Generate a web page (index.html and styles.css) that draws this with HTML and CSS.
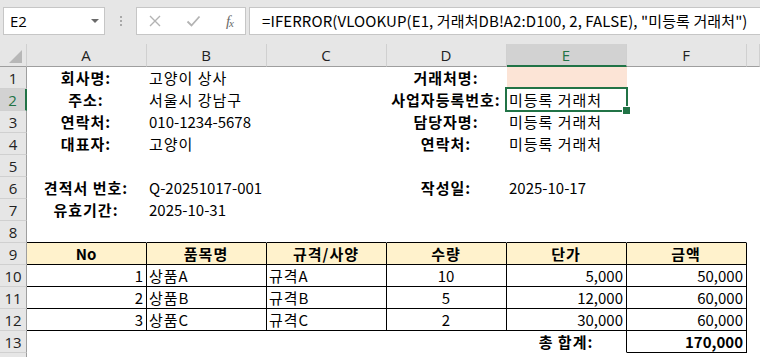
FILE: index.html
```html
<!DOCTYPE html>
<html>
<head>
    <meta charset="utf-8">
    <title>견적서 - Excel</title>
    <link rel="stylesheet" href="styles.css">
</head>
<body>
    <div class="formula-bar">
        <div class="name-box">
            <span>E2</span>
            <svg class="caret" width="8" height="5" viewBox="0 0 8 5"><path d="M0 0h8L4 4z" fill="#6a6a6a"/></svg>
        </div>
        <div class="grip"><i></i><i></i><i></i></div>
        <div class="fn-buttons">
            <svg width="14" height="14" viewBox="0 0 14 14"><path d="M2 2l10 10M12 2L2 12" stroke="#b3b3b3" stroke-width="1.4" fill="none"/></svg>
            <svg width="15" height="14" viewBox="0 0 15 14"><path d="M1.5 7.5l4 4 8-9" stroke="#b3b3b3" stroke-width="1.8" fill="none"/></svg>
            <span class="fx">f<sub>x</sub></span>
        </div>
        <div class="formula-input">=IFERROR(VLOOKUP(E1, 거래처DB!A2:D100, 2, FALSE), "미등록 거래처")</div>
    </div>

    <table class="sheet">
        <colgroup>
            <col class="col-rh">
            <col class="col"><col class="col"><col class="col">
            <col class="col"><col class="col"><col class="col">
            <col>
        </colgroup>
        <thead>
            <tr>
                <th class="corner"><span></span></th>
                <th>A</th><th>B</th><th>C</th><th>D</th>
                <th class="active">E</th><th>F</th><th></th>
            </tr>
        </thead>
        <tbody>
            <tr>
                <td class="rh">1</td>
                <td class="b c">회사명:</td><td>고양이 상사</td><td></td>
                <td class="b c">거래처명:</td><td class="peach"></td><td></td><td></td>
            </tr>
            <tr>
                <td class="rh active">2</td>
                <td class="b c">주소:</td><td>서울시 강남구</td><td></td>
                <td class="b c">사업자등록번호:</td><td class="sel">미등록 거래처</td><td></td><td></td>
            </tr>
            <tr>
                <td class="rh">3</td>
                <td class="b c">연락처:</td><td class="n">010-1234-5678</td><td></td>
                <td class="b c">담당자명:</td><td>미등록 거래처</td><td></td><td></td>
            </tr>
            <tr>
                <td class="rh">4</td>
                <td class="b c">대표자:</td><td>고양이</td><td></td>
                <td class="b c">연락처:</td><td>미등록 거래처</td><td></td><td></td>
            </tr>
            <tr>
                <td class="rh">5</td>
                <td></td><td></td><td></td><td></td><td></td><td></td><td></td>
            </tr>
            <tr>
                <td class="rh">6</td>
                <td class="b c">견적서 번호:</td><td class="n">Q-20251017-001</td><td></td>
                <td class="b c">작성일:</td><td class="n">2025-10-17</td><td></td><td></td>
            </tr>
            <tr>
                <td class="rh">7</td>
                <td class="b c">유효기간:</td><td class="n">2025-10-31</td><td></td>
                <td></td><td></td><td></td><td></td>
            </tr>
            <tr>
                <td class="rh">8</td>
                <td class="edge"></td><td class="edge"></td><td class="edge"></td>
                <td class="edge"></td><td class="edge"></td><td class="edge"></td><td></td>
            </tr>
            <tr>
                <td class="rh">9</td>
                <td class="t head n">No</td><td class="t head">품목명</td><td class="t head">규격/사양</td>
                <td class="t head">수량</td><td class="t head">단가</td><td class="t head">금액</td><td></td>
            </tr>
            <tr>
                <td class="rh">10</td>
                <td class="t r n">1</td><td class="t">상품A</td><td class="t">규격A</td>
                <td class="t c n">10</td><td class="t r n">5,000</td><td class="t r n">50,000</td><td></td>
            </tr>
            <tr>
                <td class="rh">11</td>
                <td class="t r n">2</td><td class="t">상품B</td><td class="t">규격B</td>
                <td class="t c n">5</td><td class="t r n">12,000</td><td class="t r n">60,000</td><td></td>
            </tr>
            <tr>
                <td class="rh">12</td>
                <td class="t r n">3</td><td class="t">상품C</td><td class="t">규격C</td>
                <td class="t c n">2</td><td class="t r n">30,000</td><td class="t r n">60,000</td><td></td>
            </tr>
            <tr>
                <td class="rh">13</td>
                <td></td><td></td><td></td><td></td>
                <td class="b c side">총 합계:</td><td class="t b r n">170,000</td><td></td>
            </tr>
            <tr>
                <td class="rh"></td>
                <td></td><td></td><td></td><td></td><td></td><td></td><td></td>
            </tr>
        </tbody>
    </table>
</body>
</html>
```

FILE: styles.css
```css
:root {
    --chrome: #e6e6e6;
    --header: #e6e6e6;
    --header-active: #d2d2d2;
    --line: #d0d0d0;
    --line-dark: #9e9e9e;
    --green: #217346;
}

* {
    box-sizing: border-box;
}

body {
    margin: 0;
    width: 760px;
    height: 357px;
    overflow: hidden;
    background: #fff;
    color: #000;
    font-family: "Noto Sans CJK KR", "Noto Sans", sans-serif;
}

/* formula bar */
.formula-bar {
    display: flex;
    align-items: flex-start;
    height: 44px;
    padding: 7px 0 0 3px;
    background: var(--chrome);
}

.name-box {
    width: 102px;
    height: 28px;
    display: flex;
    align-items: center;
    justify-content: space-between;
    padding: 0 5px 0 6px;
    background: #fff;
    border: 1px solid #c6c6c6;
    font: 15px "Open Sans", "Noto Sans", sans-serif;
}

.grip {
    width: 31px;
    height: 28px;
    display: flex;
    flex-direction: column;
    align-items: center;
    justify-content: center;
    gap: 2px;
}

.grip i {
    width: 2px;
    height: 2px;
    background: #a8a8a8;
}

.fn-buttons {
    width: 110px;
    height: 28px;
    display: flex;
    align-items: center;
    justify-content: space-between;
    padding: 0 12px 0 11px;
    background: #fff;
    border: 1px solid #c6c6c6;
}

.fx {
    font: italic 15px "Liberation Serif", serif;
    color: #6a6a6a;
    letter-spacing: -1px;
}

.fx sub {
    font-size: 11px;
    vertical-align: -1px;
}

.formula-input {
    flex: 1;
    height: 28px;
    margin-left: 3px;
    padding-left: 12px;
    background: #fff;
    border: 1px solid #c6c6c6;
    border-right: none;
    font-size: 15px;
    line-height: 26px;
    letter-spacing: 0.1px;
    white-space: nowrap;
    overflow: hidden;
}

/* sheet grid */
.sheet {
    width: 760px;
    table-layout: fixed;
    border-collapse: separate;
    border-spacing: 0;
    font-size: 15px;
}

.col-rh {
    width: 27px;
}

.col {
    width: 120px;
}

.sheet th,
.sheet td {
    height: 22px;
    padding: 0 3px 0 2px;
    line-height: 20px;
    letter-spacing: 1px;
    text-align: left;
    font-weight: normal;
    white-space: nowrap;
    overflow: visible;
    border-right: 1px solid transparent;
    border-bottom: 1px solid transparent;
}

.sheet td.n {
    letter-spacing: 0;
}

.sheet th {
    height: 23px;
    letter-spacing: 0;
    text-align: center;
    background: var(--header);
    border-right-color: var(--line);
    border-bottom-color: var(--line-dark);
    font-family: "Open Sans", "Noto Sans", sans-serif;
    color: #222;
}

.sheet th.active {
    background: var(--header-active);
    color: var(--green);
    border-bottom: 2px solid var(--green);
}

.corner {
    position: relative;
}

.corner span {
    position: absolute;
    right: 4px;
    bottom: 3px;
    width: 0;
    height: 0;
    border-left: 13px solid transparent;
    border-bottom: 13px solid #b7b7b7;
}

.sheet td.rh {
    padding: 0;
    letter-spacing: 0;
    text-align: center;
    background: var(--header);
    border-right-color: var(--line-dark);
    border-bottom-color: var(--line);
    font-family: "Open Sans", "Noto Sans", sans-serif;
    color: #222;
}

.sheet td.rh.active {
    background: var(--header-active);
    color: var(--green);
    border-right: 2px solid var(--green);
}

.sheet td.b {
    font-weight: bold;
}

.sheet td.c {
    text-align: center;
}

.sheet td.r {
    text-align: right;
}

.peach {
    background: #fce4d6;
}

.sel {
    position: relative;
}

.sel::after {
    content: '';
    position: absolute;
    left: -2px;
    top: -2px;
    right: -2px;
    bottom: -2px;
    border: 2px solid var(--green);
}

.sel::before {
    content: '';
    position: absolute;
    right: -5px;
    bottom: -5px;
    width: 7px;
    height: 7px;
    background: var(--green);
    border: 1px solid #fff;
    z-index: 1;
}

/* quote table borders */
.sheet td.edge {
    border-bottom-color: #000;
}

.sheet td.t {
    border-right-color: #000;
    border-bottom-color: #000;
}

.sheet td.head {
    background: #fff2cc;
    font-weight: bold;
    text-align: center;
}

.sheet td.side {
    border-right-color: #000;
}
```
